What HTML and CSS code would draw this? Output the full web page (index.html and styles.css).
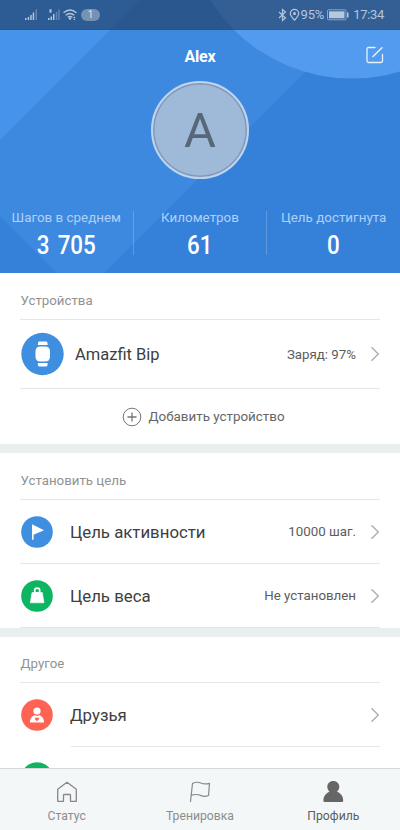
FILE: index.html
```html
<!DOCTYPE html>
<html lang="ru">
<head>
<meta charset="utf-8">
<title>Профиль</title>
<link rel="stylesheet" href="styles.css">
</head>
<body>
<div class="app">
  <header class="hero">
    <svg class="hero-bg" width="400" height="273" viewBox="0 0 400 273">
      <rect width="400" height="273" fill="#3e89e0"/>
      <path d="M0 0H140L0 140Z" fill="#4593ea"/>
      <path d="M377 0L104 273H400V0ZM0 216L57 273H0Z" fill="#3581da"/>
      <circle cx="352" cy="-89" r="167.6" fill="#539bee"/>
    </svg>
    <div class="statusbar">
      <svg class="signals" width="54" height="14" viewBox="0 0 54 14">
        <g fill="#b4c6dc"><path d="M0 10h1.5v2H0zM2.700 9h1.500v3H2.700zM5.200 7h1.500v5H5.200zM7.700 4.500h1.500v7.500H7.700z"/><path opacity=".4" d="M10.500 1.500H12V12h-1.500z"/><path d="M23 10h1.500v2H23zM25.500 8.500H27V12h-1.500zM28 6h1.500v6H28z"/><path d="M24.500 1.200h2v3.500h-2z"/><path opacity=".4" d="M30.800 4h1.500v8h-1.500zM33.200 1.500h1.500V12h-1.500z"/><circle cx="45" cy="10.500" r="1.300"/><path d="M48 10l1.300-1.500L50.600 10zM48 10.800l1.300 1.500 1.300-1.500z"/></g>
        <g fill="none" stroke="#b4c6dc" stroke-width="1.300"><path d="M38.500 4.800q6.500-5.600 13 0M40.700 7.300q4.300-3.600 8.600 0M42.700 9.300q2.300-1.800 4.600 0"/></g>
      </svg>
      <span class="pill">1</span>
      <svg class="bt" width="22" height="14" viewBox="0 0 22 14" fill="none" stroke="#b4c6dc" stroke-width="1.200"><path d="M1 4l6.500 6L4.500 12.500V1.500L7.500 4 1 10"/><path d="M16.500 12.200C14 9.500 12.300 7.800 12.300 5.600a4.200 4.200 0 0 1 8.400 0c0 2.200-1.700 3.900-4.200 6.600z"/><circle cx="16.500" cy="5.600" r=".9" fill="#b4c6dc"/></svg>
      <span class="pct">95%</span>
      <svg class="batt" width="22" height="12" viewBox="0 0 22 12"><rect x=".5" y=".8" width="18.500" height="10" rx="1" fill="none" stroke="#a0b5cf" stroke-width=".8"/><path d="M2 2.300h15.500v7H2z" fill="#b8c8dc"/><path d="M20 3.500h1.500v5H20z" fill="#b4c6dc"/></svg>
      <span class="time">17:34</span>
    </div>
    <div class="titlebar">
      <h1>Alex</h1>
      <svg class="edit" width="18" height="18" viewBox="0 0 18 18" fill="none" stroke="#e8f1fc" stroke-width="1.300" stroke-linecap="round"><path d="M9 1.500H2.500a1.500 1.500 0 0 0-1.500 1.500V15a1.500 1.500 0 0 0 1.500 1.500H15a1.500 1.500 0 0 0 1.500-1.500V8.500"/><path d="M7 10.500L16 1.700" stroke-width="1.500"/></svg>
    </div>
    <div class="avatar"><span>A</span></div>
    <div class="stats">
      <div class="stat"><span class="label">Шагов в среднем</span><span class="num">3 705</span></div>
      <div class="stat"><span class="label">Километров</span><span class="num">61</span></div>
      <div class="stat"><span class="label">Цель достигнута</span><span class="num">0</span></div>
    </div>
  </header>
  <main class="content">
    <section class="section devices">
      <h2>Устройства</h2>
      <div class="row device">
        <svg class="ic" width="44" height="44" viewBox="0 0 44 44"><circle cx="22.500" cy="22" r="21.200" fill="#3e8fe0"/><g fill="#fff"><rect x="15.500" y="14.500" width="14.500" height="15" rx="4.500"/><path d="M19 9.500h7.500q1 0 1.200 3.500h-9.900q.2-3.500 1.200-3.500zM17.800 31h9.900q-.2 3.500-1.200 3.500H19q-1 0-1.200-3.500z"/></g></svg>
        <span class="name">Amazfit Bip</span><span class="value">Заряд: 97%</span>
        <svg class="chev" width="10" height="16" viewBox="0 0 10 16"><path d="M1.500 1.200L8.300 8 1.500 14.800"/></svg>
      </div>
      <div class="add">
        <svg width="20" height="20" viewBox="0 0 20 20" fill="none" stroke="#777"><circle cx="10" cy="10" r="8.800"/><path d="M5.500 10h9M10 5.500v9" stroke-width="1.300"/></svg>
        <span>Добавить устройство</span>
      </div>
    </section>
    <section class="section goals">
      <h2>Установить цель</h2>
      <div class="row">
        <svg class="ic" width="34" height="34" viewBox="0 0 34 34"><circle cx="17" cy="17" r="15.800" fill="#3e8fe0"/><path d="M12 9.200L24 15.200 13.600 19.700V24.700H12z" fill="#fff"/></svg>
        <span class="name">Цель активности</span><span class="value">10000 шаг.</span>
        <svg class="chev" width="10" height="16" viewBox="0 0 10 16"><path d="M1.500 1.200L8.300 8 1.500 14.800"/></svg>
      </div>
      <div class="row">
        <svg class="ic" width="34" height="34" viewBox="0 0 34 34"><circle cx="17" cy="17" r="15.800" fill="#0db563"/><path d="M12 13.500h10.300l1.700 10.300H10.300z" fill="#fff" stroke="#fff" stroke-linejoin="round" stroke-width=".6"/><circle cx="17.200" cy="11.700" r="2.600" fill="none" stroke="#fff" stroke-width="1.600"/></svg>
        <span class="name">Цель веса</span><span class="value">Не установлен</span>
        <svg class="chev" width="10" height="16" viewBox="0 0 10 16"><path d="M1.500 1.200L8.300 8 1.500 14.800"/></svg>
      </div>
    </section>
    <section class="section other">
      <h2>Другое</h2>
      <div class="row friends">
        <svg class="ic" width="34" height="34" viewBox="0 0 34 34"><circle cx="17" cy="17" r="15.800" fill="#ff6354"/><circle cx="17" cy="13" r="3.600" fill="#fff"/><path d="M10 24.500c0-4.500 2.200-6.700 5-7.300q2 1 4 0c2.800.6 5 2.800 5 7.300z" fill="#fff"/><path d="M17 23.300l-2-2a1.150 1.150 0 0 1 2-1.300 1.150 1.150 0 0 1 2 1.300z" fill="#ff6354"/></svg>
        <div class="line">
          <span class="name">Друзья</span>
          <svg class="chev" width="10" height="16" viewBox="0 0 10 16"><path d="M1.500 1.200L8.300 8 1.500 14.800"/></svg>
        </div>
      </div>
      <div class="row next">
        <svg class="ic" width="34" height="34" viewBox="0 0 34 34"><circle cx="17" cy="17" r="15.800" fill="#0db563"/></svg>
      </div>
    </section>
  </main>
  <nav class="tabs">
    <div class="tab">
      <svg width="24" height="24" viewBox="0 0 24 24" fill="none" stroke="#888" stroke-width="1.300" stroke-linejoin="round"><path d="M2.700 9.200L12 2.300l9.300 6.900v12.100h-5.800v-6q0-.8-.8-.8H9.300q-.8 0-.8.800v6H2.700z"/></svg>
      <span>Статус</span>
    </div>
    <div class="tab">
      <svg width="24" height="24" viewBox="0 0 24 24" fill="none" stroke="#888" stroke-width="1.200" stroke-linejoin="round" stroke-linecap="round"><path d="M2.500 21.500L4.500 3.500C7.500 1.800 10.200 2 12.700 3s5 1.400 8.800.3L20.500 15.500c-3 1.200-5.500 1-8-.1s-5-1.400-9.200-.2"/></svg>
      <span>Тренировка</span>
    </div>
    <div class="tab active">
      <svg width="24" height="24" viewBox="0 0 24 24" fill="#666"><path d="M12.300 1c3.600 0 6 2.500 6 5.800 0 2-.9 3.800-2.300 5 3.500 1.400 6.200 4.200 6.200 8.700 0 1.200-.6 1.600-1.600 1.600H4c-1 0-1.600-.4-1.600-1.600 0-4.500 2.700-7.300 6.200-8.700C7.200 10.600 6.300 8.800 6.300 6.800c0-3.300 2.400-5.800 6-5.800z"/></svg>
      <span>Профиль</span>
    </div>
  </nav>
</div>
</body>
</html>
```
FILE: styles.css
```css
* { box-sizing: border-box; }
body { margin: 0; font-family: Roboto, "Noto Sans", sans-serif; color: #444; background: #fff; }
svg { display: block; flex: none; }
h1, h2 { margin: 0; }
.app { width: 400px; height: 830px; display: flex; flex-direction: column; overflow: hidden; }
.hero { position: relative; height: 273px; flex: none; display: flex; flex-direction: column; align-items: center; }
.hero-bg { position: absolute; inset: 0; z-index: -1; }
.statusbar { width: 100%; height: 30px; background: rgba(25, 45, 75, .55); display: flex; align-items: center; padding: 0 16px 0 25px; color: #b4c6dc; font-size: 13px; border-bottom: 1px solid rgba(25, 45, 75, .1); }
.pill { width: 19px; height: 12px; margin-left: 2px; border-radius: 6px; background: #7891b3; color: #dbe4ef; font-size: 10px; line-height: 12px; text-align: center; }
.bt { margin-left: auto; }
.pct { margin-left: 1px; letter-spacing: -.2px; }
.batt { margin-left: 3px; }
.time { margin-left: 4px; letter-spacing: -.3px; }
.titlebar { width: 100%; height: 51px; position: relative; display: flex; justify-content: center; align-items: center; }
.titlebar h1 { color: #fff; font-size: 16px; font-weight: 700; letter-spacing: -.2px; padding-top: 2px; }
.edit { position: absolute; right: 16px; top: 16px; }
.avatar { width: 98px; height: 98px; border-radius: 50%; border: 2px solid #bdd4ef; background: #9fb9d9; box-shadow: inset 0 0 0 1.500px #8298b6; display: flex; align-items: center; justify-content: center; color: #566778; font-size: 49px; line-height: 1; }
.stats { display: flex; width: 100%; margin-top: 29px; }
.stat { position: relative; flex: 1; height: 48px; display: flex; flex-direction: column; align-items: center; }
.stat + .stat { border-left: 1px solid rgba(255, 255, 255, .2); height: 44px; margin-top: 3px; }
.stat + .stat .label { margin-top: -3px; }
.label { font-size: 13.400px; line-height: 20px; color: #b0d0f5; white-space: nowrap; }
.num { font-size: 26px; line-height: 32px; margin-top: 1px; font-weight: 500; color: #fff; transform: scaleX(.86); word-spacing: 3px; white-space: nowrap; }
.content { flex: 1; min-height: 0; overflow: hidden; }
.section { padding: 0 20px; border-bottom: 9px solid #e9eeef; }
h2 { font-size: 13.300px; font-weight: 400; color: #929292; border-bottom: 1px solid #e6e6e6; display: flex; align-items: center; height: 47px; padding: 9px 0 0 .5px; }
.row { display: flex; align-items: center; height: 64px; border-bottom: 1px solid #e6e6e6; }
.name { font-size: 16.800px; margin-left: 16px; color: #3e3e3e; white-space: nowrap; }
.value { margin-left: auto; font-size: 13.300px; color: #5c5c5c; white-space: nowrap; }
.chev { margin-left: 14px; fill: none; stroke: #aaa; stroke-width: 1.300; }
.device { height: 69px; }
.device .name { margin-left: 11px; font-size: 16.500px; }
.add { display: flex; align-items: center; justify-content: center; gap: 6px; height: 55px; padding-left: 7px; font-size: 13.400px; color: #666; }
.other { border-bottom: 0; }
.other h2 { height: 46px; padding-top: 8px; }
.friends { border-bottom: 0; }
.friends .ic { margin-bottom: 1px; }
.line { flex: 1; height: 64px; margin-left: 17px; display: flex; align-items: center; border-bottom: 1px solid #e6e6e6; }
.line .name { margin-left: -1px; }
.line .chev { margin-left: auto; }
.next { border: 0; height: 62px; }
.tabs { height: 62px; flex: none; background: #f3f7f8; border-top: 1px solid #d5d9da; display: flex; }
.tab { flex: 1; display: flex; flex-direction: column; align-items: center; padding-top: 11px; gap: 4px; color: #8d8d8d; font-size: 12.200px; line-height: 16px; }
.active { color: #5d5d5d; }
```
